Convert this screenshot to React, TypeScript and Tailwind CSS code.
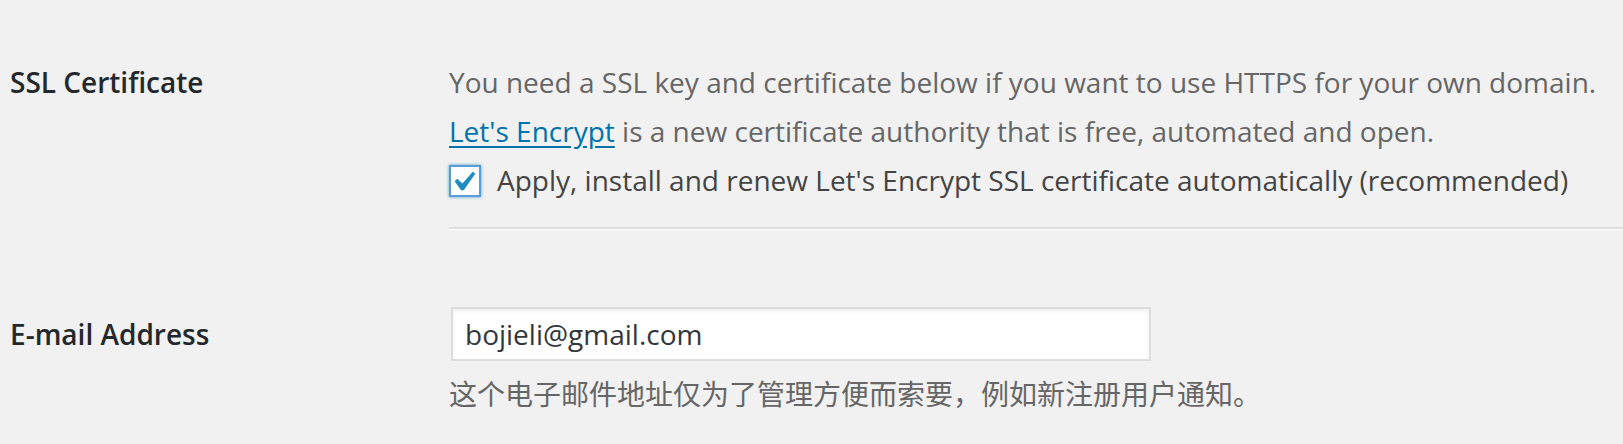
export default function App() {
  return (
    <div
      className="min-h-[444px] w-full bg-[#f1f1f1] text-[28px] text-[#444]"
      style={{ fontFamily: '"Open Sans", "Noto Sans CJK SC", sans-serif' }}
    >
      {/* SSL row */}
      <div className="flex pt-[58px]">
        <div className="w-[449px] shrink-0 pl-[10px] font-semibold leading-[49px] text-[#23282d]">
          SSL Certificate
        </div>
        <div className="flex-1">
          <p className="leading-[49px] text-[#666]">
            You need a SSL key and certificate below if you want to use HTTPS for your own domain.
          </p>
          <p className="leading-[49px] text-[#666]">
            <a href="#" className="text-[#0073aa] underline underline-offset-[4px]">
              Let's Encrypt
            </a>{' '}
            is a new certificate authority that is free, automated and open.
          </p>
          <label className="flex h-[49px] items-center gap-[16px] leading-[49px] text-[#444]">
            <span className="flex h-[32px] w-[32px] shrink-0 items-center justify-center border-2 border-[#5b9dd9] bg-white shadow-[0_0_3px_rgba(30,140,190,0.8)]">
              <svg viewBox="3.97 2.55 14 14" className="h-[28px] w-[28px]" fill="#1e8cbe">
                <path d="M14.83 4.89l1.34.94-5.81 8.38H9.02L5.78 9.67l1.34-1.25 2.57 2.4z" />
              </svg>
            </span>
            Apply, install and renew Let's Encrypt SSL certificate automatically (recommended)
          </label>
          <div className="mt-[22px] border-t-2 border-b border-t-[#dddddd] border-b-white" />
        </div>
      </div>

      {/* Email row */}
      <div className="flex pt-[77px]">
        <div className="w-[449px] shrink-0 pl-[10px] font-semibold leading-[54px] text-[#23282d]">
          E-mail Address
        </div>
        <div className="flex-1 pl-[2px]">
          <input
            type="text"
            defaultValue="bojieli@gmail.com"
            className="block h-[54px] w-[700px] border-2 border-[#dddddd] bg-white px-[12px] text-[28px] text-[#32373c] shadow-[inset_0_2px_4px_rgba(0,0,0,0.07)] outline-none"
            style={{ fontFamily: '"Open Sans", sans-serif' }}
          />
          <p className="-ml-[2px] mt-[9px] leading-[48px] text-[#666]">
            这个电子邮件地址仅为了管理方便而索要，例如新注册用户通知。
          </p>
        </div>
      </div>
    </div>
  );
}
